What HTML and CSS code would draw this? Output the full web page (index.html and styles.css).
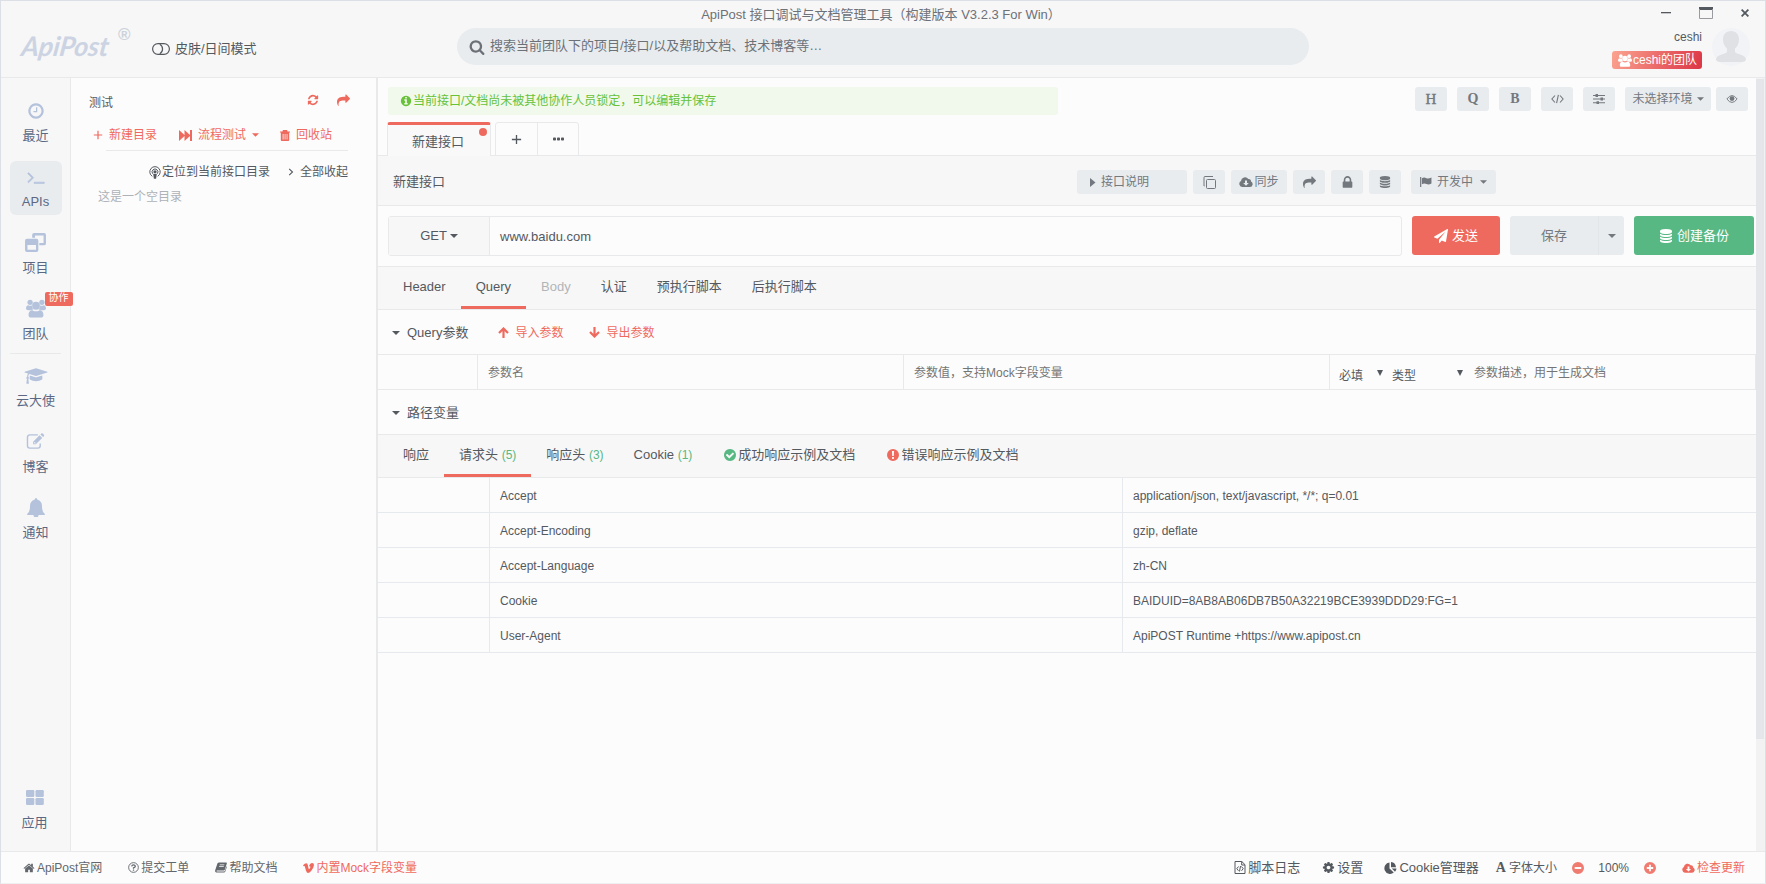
FILE: index.html
```html
<!DOCTYPE html>
<html lang="zh-CN">
<head>
  <meta charset="UTF-8" />
  <title>ApiPost</title>
  <link rel="stylesheet" href="styles.css">
</head>
<body>
  <svg class="sprite">
    <symbol id="i-clock" viewBox="0 0 1792 1792"><path d="M1024 544v448q0 14-9 23t-23 9h-320q-14 0-23-9t-9-23v-64q0-14 9-23t23-9h224v-352q0-14 9-23t23-9h64q14 0 23 9t9 23zm416 352q0-148-73-273t-198-198-273-73-273 73-198 198-73 273 73 273 198 198 273 73 273-73 198-198 73-273zm224 0q0 209-103 385.5t-279.5 279.5-385.5 103-385.5-103-279.5-279.5-103-385.5 103-385.5 279.5-279.5 385.5-103 385.5 103 279.5 279.5 103 385.5z"/></symbol>
    <symbol id="i-terminal" viewBox="0 0 1792 1792"><path d="M649 983l-466 466q-10 10-23 10t-23-10l-50-50q-10-10-10-23t10-23l393-393-393-393q-10-10-10-23t10-23l50-50q10-10 23-10t23 10l466 466q10 10 10 23t-10 23zm1079 457v64q0 14-9 23t-23 9h-960q-14 0-23-9t-9-23v-64q0-14 9-23t23-9h960q14 0 23 9t9 23z" stroke="currentColor" stroke-width="60"/></symbol>
    <symbol id="i-cap" viewBox="0 0 2304 1792"><path d="M1774 836l18 316q4 69-82 128t-235 93.500-323 34.500-323-34.500-235-93.500-82-128l18-316 574 181q22 7 48 7t48-7zm530-324q0 23-22 31l-1120 352q-4 1-10 1t-10-1l-652-206q-43 34-71 111.500t-34 178.500q63 36 63 109 0 69-58 107l58 433q2 14-8 25-9 11-24 11h-192q-15 0-24-11-10-11-8-25l58-433q-58-38-58-107 0-73 65-111 11-207 98-330l-333-104q-22-8-22-31t22-31l1120-352q4-1 10-1t10 1l1120 352q22 8 22 31z"/></symbol>
    <symbol id="i-refresh" viewBox="0 0 1792 1792"><path d="M1639 1056q0 5-1 7-64 268-268 434.5t-478 166.5q-146 0-282.500-55t-243.500-157l-129 129q-19 19-45 19t-45-19-19-45v-448q0-26 19-45t45-19h448q26 0 45 19t19 45-19 45l-137 137q71 66 161 102t187 36q134 0 250-65t186-179q11-17 53-117 8-23 30-23h192q13 0 22.500 9.500t9.500 22.500zm25-800v448q0 26-19 45t-45 19h-448q-26 0-45-19t-19-45 19-45l138-138q-148-137-349-137-134 0-250 65t-186 179q-11 17-53 117-8 23-30 23h-199q-13 0-22.500-9.500t-9.500-22.500v-7q65-268 270-434.500t480-166.500q146 0 284 55.500t245 156.500l130-129q19-19 45-19t45 19 19 45z"/></symbol>
    <symbol id="i-share" viewBox="0 0 1792 1792"><path d="M1792 640q0 26-19 45l-512 512q-19 19-45 19t-45-19-19-45v-256h-224q-98 0-175.500 6t-154 21.500-133 42.500-105.500 69.500-80 101-48.500 138.500-17.500 181q0 55 5 123 0 6 2.500 23.500t2.500 26.500q0 15-8.500 25t-23.500 10q-16 0-28-17-7-9-13-22t-13.500-30-10.500-24q-127-285-127-451 0-199 53-333 162-403 875-403h224v-256q0-26 19-45t45-19 45 19l512 512q19 19 19 45z"/></symbol>
    <symbol id="i-search" viewBox="0 0 1792 1792"><path d="M1216 832q0-185-131.500-316.500t-316.500-131.500-316.500 131.500-131.500 316.500 131.500 316.500 316.500 131.500 316.500-131.500 131.500-316.500zm512 832q0 52-38 90t-90 38q-54 0-90-38l-343-342q-179 124-399 124-143 0-273.500-55.500t-225-150-150-225-55.500-273.500 55.500-273.500 150-225 225-150 273.500-55.500 273.500 55.500 225 150 150 225 55.500 273.500q0 220-124 399l343 343q37 37 37 90z"/></symbol>
    <symbol id="i-info" viewBox="0 0 1792 1792"><path d="M1152 1376v-160q0-14-9-23t-23-9h-96v-512q0-14-9-23t-23-9h-320q-14 0-23 9t-9 23v160q0 14 9 23t23 9h96v320h-96q-14 0-23 9t-9 23v160q0 14 9 23t23 9h448q14 0 23-9t9-23zm-128-896v-160q0-14-9-23t-23-9h-192q-14 0-23 9t-9 23v160q0 14 9 23t23 9h192q14 0 23-9t9-23zm640 416q0 209-103 385.500t-279.500 279.500-385.500 103-385.500-103-279.500-279.500-103-385.500 103-385.500 279.500-279.500 385.500-103 385.500 103 279.500 279.500 103 385.500z"/></symbol>
    <symbol id="i-check" viewBox="0 0 1792 1792"><path d="M1412 734q0-28-18-46l-91-90q-19-19-45-19t-45 19l-408 407-226-226q-19-19-45-19t-45 19l-91 90q-18 18-18 46 0 27 18 45l362 362q19 19 45 19 27 0 46-19l543-543q18-18 18-45zm252 162q0 209-103 385.500t-279.500 279.500-385.500 103-385.500-103-279.500-279.500-103-385.500 103-385.500 279.500-279.500 385.500-103 385.500 103 279.500 279.500 103 385.500z"/></symbol>
    <symbol id="i-lock" viewBox="0 0 1792 1792"><path d="M640 768h512v-192q0-106-75-181t-181-75-181 75-75 181v192zm832 96v576q0 40-28 68t-68 28h-960q-40 0-68-28t-28-68v-576q0-40 28-68t68-28h32v-192q0-184 132-316t316-132 316 132 132 316v192h32q40 0 68 28t28 68z"/></symbol>
    <symbol id="i-db" viewBox="0 0 1792 1792"><path d="M896 768q237 0 443-43t325-127v170q0 69-103 128t-280 93.500-385 34.500-385-34.500-280-93.500-103-128v-170q119 84 325 127t443 43zm0 768q237 0 443-43t325-127v170q0 69-103 128t-280 93.500-385 34.500-385-34.500-280-93.500-103-128v-170q119 84 325 127t443 43zm0-384q237 0 443-43t325-127v170q0 69-103 128t-280 93.500-385 34.500-385-34.500-280-93.500-103-128v-170q119 84 325 127t443 43zm0-1152q208 0 385 34.500t280 93.500 103 128v128q0 69-103 128t-280 93.500-385 34.500-385-34.500-280-93.500-103-128v-128q0-69 103-128t280-93.500 385-34.500z"/></symbol>
    <symbol id="i-plane" viewBox="0 0 1792 1792"><path d="M1764 11q33 24 27 64l-256 1536q-5 29-32 45-14 8-31 8-11 0-24-5l-453-185-242 295q-18 23-49 23-13 0-22-4-19-7-30.500-23.500t-11.500-36.500v-349l864-1059-1069 925-395-162q-37-14-40-55-2-40 32-59l1664-960q15-9 32-9 20 0 36 11z"/></symbol>
    <symbol id="i-home" viewBox="0 0 1792 1792"><path d="M1472 992v480q0 26-19 45t-45 19h-384v-384h-256v384h-384q-26 0-45-19t-19-45v-480q0-1 .5-3t.5-3l575-474 575 474q1 2 1 6zm223-69l-62 74q-8 9-21 11h-3q-13 0-21-7l-692-577-692 577q-12 8-24 7-13-2-21-11l-62-74q-8-10-7-23.500t11-21.500l719-599q32-26 76-26t76 26l244 204v-195q0-14 9-23t23-9h192q14 0 23 9t9 23v408l219 182q10 8 11 21.500t-7 23.500z"/></symbol>
    <symbol id="i-cog" viewBox="0 0 1792 1792"><path d="M1152 896q0-106-75-181t-181-75-181 75-75 181 75 181 181 75 181-75 75-181zm512-109v222q0 12-8 23t-20 13l-185 28q-19 54-39 91 35 50 107 138 10 12 10 25t-9 23q-27 37-99 108t-94 71q-12 0-26-9l-138-108q-44 23-91 38-16 136-29 186-7 28-36 28h-222q-14 0-24.500-8.500t-11.500-21.500l-28-184q-49-16-90-37l-141 107q-10 9-25 9-14 0-25-11-126-114-165-168-7-10-7-23 0-12 8-23 15-21 51-66.500t54-70.500q-27-50-41-99l-183-27q-13-2-21-12.500t-8-23.500v-222q0-12 8-23t19-13l186-28q14-46 39-92-40-57-107-138-10-12-10-24 0-10 9-23 26-36 98.500-107.500t94.500-71.500q13 0 26 10l138 107q44-23 91-38 16-136 29-186 7-28 36-28h222q14 0 24.500 8.500t11.500 21.500l28 184q49 16 90 37l142-107q9-9 24-9 13 0 25 10 129 119 165 170 7 8 7 22 0 12-8 23-15 21-51 66.500t-54 70.500q26 50 41 98l183 28q13 2 21 12.500t8 23.500z"/></symbol>
    <symbol id="i-windows" viewBox="0 0 22 20"><path fill-rule="evenodd" d="M9.500 0h10.500a2 2 0 0 1 2 2v9a2 2 0 0 1-2 2h-5v-2.500h4.500v-8h-9V5H7.500V2a2 2 0 0 1 2-2zM2 6h10a2 2 0 0 1 2 2v10a2 2 0 0 1-2 2H2a2 2 0 0 1-2-2V8a2 2 0 0 1 2-2zm.5 6.500v5h9v-5z"/></symbol>
    <symbol id="i-users" viewBox="0 0 22 20"><circle cx="4.500" cy="3.200" r="2.900"/><circle cx="17.500" cy="3.200" r="2.900"/><path d="M0 10c0-2 1-3.600 2.500-3.600q2.500 1.200 4 0 0 3 1.800 4.600Q6.500 11 5.300 12H2.500Q0 12 0 10zM22 10c0-2-1-3.600-2.500-3.600q-2.500 1.200-4 0 0 3-1.800 4.600 1.800 0 3 1h2.800Q22 12 22 10z"/><circle cx="11" cy="7" r="4.300"/><path d="M7 11.800q4 2.600 8 0c3 0 4.200 2.600 4.200 5.500 0 1.800-1.200 2.700-2.700 2.700h-11c-1.500 0-2.700-.9-2.700-2.700 0-2.900 1.200-5.500 4.200-5.500z"/></symbol>
    <symbol id="i-edit" viewBox="0 0 20 18"><path fill="none" stroke="currentColor" stroke-width="1.500" d="M12.500 2H4a2.500 2.500 0 0 0-2.500 2.500v9A2.500 2.500 0 0 0 4 16h8.500a2.500 2.500 0 0 0 2.500-2.500V11"/><path fill-rule="evenodd" d="M7.500 9.200l6.800-6.800 2.800 2.800-6.800 6.800H7.500zM15.200 1.500l.9-.9q.8-.6 1.600 0l1.200 1.200q.6.800 0 1.600l-.9.900zM8.700 9.800v1.200h1.200l.4-.4-1.200-1.200z"/></symbol>
    <symbol id="i-bell" viewBox="0 0 18 19"><path d="M9 0q1.200 0 1.200 1.500C13.500 2.200 15 5 15 8c0 4.500 1 6.500 3 8 0 .6-.5 1-1 1h-5.500a2.500 2.500 0 0 1-5 0H1c-.5 0-1-.4-1-1 2-1.500 3-3.500 3-8 0-3 1.500-5.800 4.800-6.500Q7.800 0 9 0z"/></symbol>
    <symbol id="i-grid" viewBox="0 0 18 15"><rect width="8.300" height="7" rx="1.200"/><rect x="9.500" width="8.300" height="7" rx="1.200"/><rect y="8" width="8.300" height="7" rx="1.200"/><rect x="9.500" y="8" width="8.300" height="7" rx="1.200"/></symbol>
    <symbol id="i-toggle" viewBox="0 0 18 12"><g fill="none" stroke="currentColor" stroke-width="1.200"><rect x=".6" y=".6" width="16.800" height="10.800" rx="5.400"/><path d="M7.800 1.300a5.400 5.400 0 0 1 0 9.400"/></g></symbol>
    <symbol id="i-plus" viewBox="0 0 10 10"><path d="M4.400.8h1.200v3.600h3.600v1.200H5.600v3.600H4.400V5.600H.8V4.400h3.600z"/></symbol>
    <symbol id="i-ff" viewBox="0 0 13 11"><path d="M0 0l5.500 5V0L11 5V0h2v11h-2V6l-5.500 5V6L0 11z"/></symbol>
    <symbol id="i-trash" viewBox="0 0 10 11"><path fill-rule="evenodd" d="M3 0h4l.6 1.400H10v1.200h-.8V10q0 1-1 1H1.800q-1 0-1-1V2.600H0V1.400h2.400zM2.700 4v5.500h.8V4zm2 0v5.500h.7V4zm2 0v5.500h.7V4z"/></symbol>
    <symbol id="i-podcast" viewBox="0 0 12 13"><g fill="none" stroke="currentColor"><path d="M3.300 10.300a5.200 5.200 0 1 1 5.400 0"/><path d="M3.800 7.800a2.900 2.900 0 1 1 4.400 0"/></g><circle cx="6" cy="5.800" r="1.600"/><path d="M4.200 8h3.600l-.7 4.800H4.900z"/></symbol>
    <symbol id="i-right" viewBox="0 0 6 8"><path fill="none" stroke="currentColor" stroke-width="1.100" d="M1.200.8L4.500 4 1.200 7.200"/></symbol>
    <symbol id="i-caret" viewBox="0 0 8 4"><path d="M0 0h8L4 4z"/></symbol>
    <symbol id="i-play" viewBox="0 0 6 9"><path d="M0 0l5.500 4.500L0 9z"/></symbol>
    <symbol id="i-down" viewBox="0 0 6 6"><path d="M0 0h6L3 6z"/></symbol>
    <symbol id="i-dots" viewBox="0 0 11 4"><rect y=".5" width="3" height="3" rx=".8"/><rect x="4" y=".5" width="3" height="3" rx=".8"/><rect x="8" y=".5" width="3" height="3" rx=".8"/></symbol>
    <symbol id="i-copy" viewBox="0 0 13 13"><g fill="none" stroke="currentColor"><rect x="3.500" y="3.500" width="9" height="9" rx="1"/><path d="M1.500 10h-.5V1.500q0-1 1-1h8"/></g></symbol>
    <symbol id="i-cloud" viewBox="0 0 14 10"><path fill-rule="evenodd" d="M3.200 10A3.200 3.200 0 0 1 2 4 4 4 0 0 1 9.300 2.100 2.200 2.200 0 0 1 12 4.500 2.900 2.900 0 0 1 11 10zM6 3.500V6H4.200L7 8.800 9.800 6H8V3.500z"/></symbol>
    <symbol id="i-code" viewBox="0 0 13 10"><path fill="none" stroke="currentColor" stroke-width="1.100" d="M4 1.500L.9 5 4 8.500M9 1.500L12.100 5 9 8.500M7.400.8L5.600 9.200"/></symbol>
    <symbol id="i-sliders" viewBox="0 0 12 10"><path d="M0 1h12v1H0zM0 4.600h12v1H0zM0 8.200h12v1H0z"/><path d="M2.500 0H5v3H2.500zM7.500 3.600H10v3H7.500zM3.500 7.200H6v3H3.500z"/></symbol>
    <symbol id="i-eye" viewBox="0 0 14 10"><path fill="none" stroke="currentColor" stroke-width="1.100" d="M1 5q6-8 12 0-6 8-12 0z"/><circle cx="7" cy="4.500" r="2.800"/></symbol>
    <symbol id="i-flag" viewBox="0 0 13 11"><path d="M0 0h1.300v11H0zM2 1.300q2.500-1.500 5 0 2 .9 5.500-.8v6.700q-3 1.800-5.500.6-2.500-1.300-5 .3z"/></symbol>
    <symbol id="i-up-arrow" viewBox="0 0 11 11"><path fill="none" stroke="currentColor" stroke-width="2.200" d="M1 6l4.500-4.500L10 6M5.500 2v9"/></symbol>
    <symbol id="i-excl" viewBox="0 0 12 12"><path fill-rule="evenodd" d="M6 0a6 6 0 1 1 0 12A6 6 0 0 1 6 0zM4.900 2l.3 5h1.600l.3-5zm.2 6v1.900h1.800V8z"/></symbol>
    <symbol id="i-ask" viewBox="0 0 12 12"><g fill="none" stroke="currentColor"><circle cx="6" cy="6" r="5.300"/><path stroke-width="1.400" d="M4 4.700q.3-1.500 2-1.500t2 1.400Q8 5.600 6 6.400v.9"/></g><path d="M5.300 8.200h1.400v1.300H5.300z"/></symbol>
    <symbol id="i-book" viewBox="0 0 13 11"><path fill-rule="evenodd" d="M4.500 0h7.700q.9.200.6 1.100L10.600 8q-.3.800-1.200.8H2q-.8.500 0 1h7.900q.7 0 .9-.7l1.600-5 .5.500-1.700 5.300q-.4 1.100-1.500 1.100H1.500Q-.3 10.600.2 8.500L2.600 1.200Q3 0 4.500 0zm.7 2.300l-.2.700h5l.2-.7zM4.600 4.200l-.2.700h5l.2-.7z"/></symbol>
    <symbol id="i-v" viewBox="0 0 12 11"><path d="M0 2.600Q2 .2 3.500.2 5 .2 5.400 2.800q.5 3.800 1.100 4 .7-.2 1.500-2.200.3-1.300-1.500-.8Q7.500.1 10 0q2.200.1 2 2.500-.3 3-3.300 6.500Q6.900 11 5.500 11T3.200 8.200L2 4q-.3-1.200-1.400-.3z"/></symbol>
    <symbol id="i-file" viewBox="0 0 11 13"><path fill="none" stroke="currentColor" d="M.5.500h6.800l3.200 3.200v8.800H.5zM7.200.5V4h3.300M4 5.500L2.300 7.700 4 9.800M7 5.500l1.700 2.200L7 9.800M6 5l-1 5.500"/></symbol>
    <symbol id="i-pie" viewBox="0 0 13 12"><path d="M5.500 0.500V6.500l4.300 4A5.700 5.700 0 1 1 5.500.5zM7 0a5.700 5.700 0 0 1 5 5.200H7zM7.800 6.500H12.500q-.2 2-1.500 3.200z"/></symbol>
    <symbol id="i-zoomout" viewBox="0 0 12 12"><path fill-rule="evenodd" d="M6 0a6 6 0 1 1 0 12A6 6 0 0 1 6 0zM2.700 5v2h6.600V5z"/></symbol>
    <symbol id="i-zoomin" viewBox="0 0 12 12"><path fill-rule="evenodd" d="M6 0a6 6 0 1 1 0 12A6 6 0 0 1 6 0zM5.100 2.800v2.300H2.800v1.800h2.300v2.300h1.800V6.900h2.300V5.100H6.900V2.800z"/></symbol>
  </svg>

  <div class="app">
    <header class="header">
      <div class="brand">
        <span class="logo">ApiPost</span><span class="reg">®</span>
        <span class="skin"><svg width="18" height="12"><use href="#i-toggle"/></svg>皮肤/日间模式</span>
      </div>
      <div class="header-mid">
        <div class="title">ApiPost 接口调试与文档管理工具（构建版本 V3.2.3 For Win）</div>
        <div class="search"><svg width="16" height="16"><use href="#i-search"/></svg>搜索当前团队下的项目/接口/以及帮助文档、技术博客等…</div>
      </div>
      <div class="header-right">
        <div class="win">
          <svg width="10" height="10" viewBox="0 0 10 10"><path d="M0 4h10v1.300H0z"/></svg>
          <svg width="14" height="12" viewBox="0 0 14 12"><path d="M0 0h14v3H0z"/><path fill="none" stroke="#999b9f" d="M.5 2v9.500h13V2"/></svg>
          <svg width="8" height="8" viewBox="0 0 8 8"><path fill="none" stroke="currentColor" stroke-width="1.800" d="M.6.6l6.800 6.800M7.400.6L.6 7.400"/></svg>
        </div>
        <div class="user">
          <div class="user-info">
            <span class="user-name">ceshi</span>
            <span class="team"><svg width="14" height="13"><use href="#i-users"/></svg>ceshi的团队</span>
          </div>
          <svg class="avatar" width="38" height="38" viewBox="0 0 38 38"><circle cx="19" cy="19" r="19" fill="#f2f3f6"/><path fill="#dfe1e5" d="M19 3c5 0 8 3.500 8 8.500 0 4-2 7.500-4 9v3.500c1 2.500 11 2 11 8q-1 2-4 2H8q-3 0-4-2c0-6 10-5.500 11-8v-3.500c-2-1.500-4-5-4-9C11 6.500 14 3 19 3z"/></svg>
        </div>
      </div>
    </header>

    <div class="body">
      <nav class="nav">
        <a class="nav-item"><svg width="18" height="18"><use href="#i-clock"/></svg>最近</a>
        <a class="nav-item active"><svg width="20" height="18"><use href="#i-terminal"/></svg>APIs</a>
        <a class="nav-item"><svg width="21" height="19"><use href="#i-windows"/></svg>项目</a>
        <a class="nav-item"><svg width="20" height="19"><use href="#i-users"/></svg>团队<span class="nav-badge">协作</span></a>
        <hr class="nav-line">
        <a class="nav-item"><svg width="24" height="18"><use href="#i-cap"/></svg>云大使</a>
        <a class="nav-item"><svg width="19" height="17"><use href="#i-edit"/></svg>博客</a>
        <a class="nav-item"><svg width="18" height="19"><use href="#i-bell"/></svg>通知</a>
        <a class="nav-item nav-apps"><svg width="18" height="15"><use href="#i-grid"/></svg>应用</a>
      </nav>

      <aside class="tree">
        <div class="tree-head">
          <span>测试</span>
          <span class="tree-acts"><svg width="12" height="12"><use href="#i-refresh"/></svg><svg width="13" height="13"><use href="#i-share"/></svg></span>
        </div>
        <div class="tree-tools">
          <span class="tool"><svg width="10" height="10"><use href="#i-plus"/></svg>新建目录</span>
          <span class="tool flow"><svg width="13" height="11"><use href="#i-ff"/></svg>流程测试<svg width="7" height="4"><use href="#i-caret"/></svg></span>
          <span class="tool"><svg width="10" height="11"><use href="#i-trash"/></svg>回收站</span>
        </div>
        <div class="tree-sub">
          <span class="locate"><svg width="12" height="13"><use href="#i-podcast"/></svg>定位到当前接口目录</span>
          <span class="fold"><svg width="6" height="8"><use href="#i-right"/></svg>全部收起</span>
        </div>
        <div class="tree-empty">这是一个空目录</div>
      </aside>

      <main class="main">
        <div class="top-row">
          <div class="alert"><svg width="12" height="12"><use href="#i-info"/></svg>当前接口/文档尚未被其他协作人员锁定，可以编辑并保存</div>
          <div class="quick">
            <button class="btn serif thin">H</button>
            <button class="btn serif">Q</button>
            <button class="btn serif">B</button>
            <button class="btn"><svg width="13" height="10"><use href="#i-code"/></svg></button>
            <button class="btn"><svg width="12" height="10"><use href="#i-sliders"/></svg></button>
            <button class="btn env">未选择环境<svg width="7" height="4"><use href="#i-caret"/></svg></button>
            <button class="btn eye"><svg width="12" height="10"><use href="#i-eye"/></svg></button>
          </div>
        </div>

        <div class="tabs">
          <div class="tab">新建接口<i class="dot"></i></div>
          <div class="tab-extra">
            <span><svg width="11" height="11"><use href="#i-plus"/></svg></span>
            <span><svg width="11" height="4"><use href="#i-dots"/></svg></span>
          </div>
        </div>

        <div class="name-row">
          <span>新建接口</span>
          <div class="name-acts">
            <button class="btn desc"><svg width="6" height="9"><use href="#i-play"/></svg>接口说明</button>
            <button class="btn"><svg width="13" height="13"><use href="#i-copy"/></svg></button>
            <button class="btn sync"><svg width="14" height="10"><use href="#i-cloud"/></svg>同步</button>
            <button class="btn"><svg width="13" height="13"><use href="#i-share"/></svg></button>
            <button class="btn"><svg width="15" height="15"><use href="#i-lock"/></svg></button>
            <button class="btn"><svg width="12" height="12"><use href="#i-db"/></svg></button>
            <button class="btn state"><svg width="12" height="10"><use href="#i-flag"/></svg>开发中<svg width="7" height="4"><use href="#i-caret"/></svg></button>
          </div>
        </div>

        <div class="url-row">
          <div class="url-box">
            <div class="method">GET<svg width="8" height="4"><use href="#i-caret"/></svg></div>
            <div class="url">www.baidu.com</div>
          </div>
          <button class="big send"><svg width="14" height="14"><use href="#i-plane"/></svg>发送</button>
          <div class="big save"><span>保存</span><i><svg width="8" height="4"><use href="#i-caret"/></svg></i></div>
          <button class="big backup"><svg width="14" height="14"><use href="#i-db"/></svg>创建备份</button>
        </div>

        <div class="menu">
          <a>Header</a><a class="on">Query</a><a class="off">Body</a><a>认证</a><a>预执行脚本</a><a>后执行脚本</a>
        </div>

        <div class="section">
          <svg width="8" height="4"><use href="#i-caret"/></svg><span>Query参数</span>
          <a class="io"><svg width="11" height="11"><use href="#i-up-arrow"/></svg>导入参数</a>
          <a class="io"><svg class="flip" width="11" height="11"><use href="#i-up-arrow"/></svg>导出参数</a>
        </div>
        <div class="params">
          <div></div>
          <div>参数名</div>
          <div>参数值，支持Mock字段变量</div>
          <div class="param-last">
            <span class="sel must">必填<svg width="6" height="6"><use href="#i-down"/></svg></span>
            <span class="sel type">类型<svg width="6" height="6"><use href="#i-down"/></svg></span>
            <span>参数描述，用于生成文档</span>
          </div>
        </div>
        <div class="section">
          <svg width="8" height="4"><use href="#i-caret"/></svg><span>路径变量</span>
        </div>

        <div class="menu resp">
          <a>响应</a>
          <a class="on">请求头 <em>(5)</em></a>
          <a>响应头 <em>(3)</em></a>
          <a>Cookie <em>(1)</em></a>
          <a><svg class="ok" width="14" height="14"><use href="#i-check"/></svg>成功响应示例及文档</a>
          <a><svg class="err" width="12" height="12"><use href="#i-excl"/></svg>错误响应示例及文档</a>
        </div>
        <div class="rows">
          <div class="row"><i></i><span>Accept</span><span>application/json, text/javascript, */*; q=0.01</span></div>
          <div class="row"><i></i><span>Accept-Encoding</span><span>gzip, deflate</span></div>
          <div class="row"><i></i><span>Accept-Language</span><span>zh-CN</span></div>
          <div class="row"><i></i><span>Cookie</span><span>BAIDUID=8AB8AB06DB7B50A32219BCE3939DDD29:FG=1</span></div>
          <div class="row"><i></i><span>User-Agent</span><span>ApiPOST Runtime +https://www.apipost.cn</span></div>
        </div>
      </main>
      <div class="scroll"><div class="thumb"></div></div>
    </div>

    <footer class="footer">
      <div class="foot-left">
        <a><svg width="12" height="12"><use href="#i-home"/></svg>ApiPost官网</a>
        <a><svg width="11" height="11"><use href="#i-ask"/></svg>提交工单</a>
        <a><svg width="12" height="11"><use href="#i-book"/></svg>帮助文档</a>
        <a class="red"><svg width="11" height="10"><use href="#i-v"/></svg>内置Mock字段变量</a>
      </div>
      <div class="foot-right">
        <a class="f-log"><svg width="12" height="13"><use href="#i-file"/></svg>脚本日志</a>
        <a class="f-set"><svg width="13" height="13"><use href="#i-cog"/></svg>设置</a>
        <a class="f-cookie"><svg width="13" height="12"><use href="#i-pie"/></svg>Cookie管理器</a>
        <a class="f-font"><b>A</b>字体大小</a>
        <svg class="zoom" width="12" height="12"><use href="#i-zoomout"/></svg>
        <span class="pct">100%</span>
        <svg class="zoom" width="12" height="12"><use href="#i-zoomin"/></svg>
        <a class="f-update"><svg width="13" height="10"><use href="#i-cloud"/></svg>检查更新</a>
      </div>
    </footer>
  </div>
</body>
</html>
```
FILE: styles.css
```css
* {
  box-sizing: border-box;
  margin: 0;
  padding: 0;
}

body {
  width: 1766px;
  height: 884px;
  overflow: hidden;
  font: 13px/18px "Liberation Sans", "Noto Sans CJK SC", sans-serif;
  color: #54595f;
  background: #fcfcfc;
}

svg {
  display: block;
  flex: none;
  fill: currentColor;
}

.sprite {
  position: absolute;
  width: 0;
  height: 0;
}

.app {
  display: flex;
  flex-direction: column;
  height: 884px;
  border: 1px solid #dcdfe6;
  border-bottom-color: #eeeff1;
}

/* header */
.header {
  display: flex;
  justify-content: space-between;
  height: 77px;
  background: #f7f7f7;
  border-bottom: 1px solid #e8e9eb;
}

.brand {
  display: flex;
  width: 456px;
  padding: 27px 0 0 20px;
}

.logo {
  width: 97px;
  font: italic 700 27px/36px Lato, sans-serif;
  letter-spacing: -0.2px;
  color: #ccd4e3;
  white-space: nowrap;
  transform: skewX(-8deg);
}

.reg {
  width: 34px;
  margin-top: -2px;
  font-size: 17px;
  font-weight: bold;
  color: #ccd2da;
}

.skin {
  display: flex;
  align-items: center;
  gap: 5px;
  height: 18px;
  margin-top: 12px;
  white-space: nowrap;
}

.header-mid {
  width: 852px;
  text-align: center;
  color: #6c7178;
}

.title {
  height: 27px;
  padding: 5px 4px 0 0;
}

.search {
  display: flex;
  align-items: center;
  gap: 5px;
  height: 37px;
  padding: 0 12px 2px;
  border-radius: 19px;
  background: #e8ecef;
}

.search svg {
  margin-top: 2px;
}

.header-right {
  width: 456px;
}

.win {
  display: flex;
  justify-content: flex-end;
  align-items: center;
  gap: 28px;
  height: 27px;
  padding: 0 16px 3px 0;
}

.user {
  display: flex;
  justify-content: flex-end;
  gap: 10px;
  padding-right: 15px;
}

.user-info {
  display: flex;
  flex-direction: column;
  align-items: flex-end;
  gap: 5px;
  font-size: 12px;
}

.team {
  display: flex;
  align-items: center;
  gap: 1px;
  width: 90px;
  height: 18px;
  padding-left: 6px;
  border-radius: 3px;
  color: #fff;
  white-space: nowrap;
  background: linear-gradient(110deg, #fba390, #dc3545);
}

/* body */
.body {
  display: flex;
  height: 773px;
}

.nav {
  display: flex;
  flex-direction: column;
  align-items: center;
  gap: 12px;
  width: 70px;
  padding-top: 17px;
  border-right: 1px solid #e8e9eb;
  background: #f7f7f7;
}

.nav-item {
  position: relative;
  display: grid;
  grid-template-rows: 31px 20px;
  place-items: center;
  width: 52px;
  height: 54px;
  border-radius: 6px;
  color: #5b6884;
}

.nav-item svg {
  color: #b4c2dc;
}

.nav-item.active {
  background: #e8ecef;
}

.nav-badge {
  position: absolute;
  top: -1px;
  left: 35px;
  width: 28px;
  height: 14px;
  border-radius: 2px;
  font-size: 10px;
  line-height: 12px;
  text-align: center;
  color: #fff;
  background: #ef6a5e;
}

.nav-line {
  width: 51px;
  height: 1px;
  margin: -6px 0;
  border: none;
  background: #e8e9eb;
}

.nav-apps {
  width: 56px;
  margin: auto 2px 15px 0;
}

.tree {
  width: 307px;
  padding: 14px 28px 0 18px;
  border-right: 2px solid #e8e9eb;
  font-size: 12px;
}

.tree-head {
  display: flex;
  justify-content: space-between;
  height: 34px;
  line-height: 22px;
}

.tree-acts {
  display: flex;
  gap: 18px;
  padding-top: 2px;
  margin-right: -2px;
  color: #ef6a5e;
}

.tree-tools {
  display: flex;
  gap: 20px;
  height: 24px;
  padding: 0 0 6px 4px;
  color: #ef6a5e;
}

.tool {
  display: flex;
  align-items: center;
  gap: 6px;
}

.tool:first-child {
  gap: 6px;
  width: 66px;
}

.flow {
  width: 81px;
}

.tree-sub {
  display: flex;
  justify-content: flex-end;
  gap: 18px;
  margin-left: 17px;
  padding: 12px 0 7px;
  border-top: 1px solid #e8e9eb;
}

.tree-sub span {
  display: flex;
  align-items: center;
}

.locate {
  gap: 1px;
}

.fold {
  gap: 6px;
}

.tree-empty {
  padding-left: 9px;
  color: #adb2b8;
}

/* main */
.main {
  width: 1378px;
}

.top-row {
  display: flex;
  justify-content: space-between;
  height: 44px;
  padding: 9px 8px 0 10px;
}

.alert {
  display: flex;
  align-items: center;
  gap: 1px;
  width: 670px;
  height: 28px;
  padding-left: 12px;
  border-radius: 3px;
  font-size: 12px;
  color: #67c23a;
  background: #f0f9eb;
}

.quick {
  display: flex;
  gap: 10px;
}

.btn {
  display: flex;
  align-items: center;
  justify-content: center;
  width: 32px;
  height: 24px;
  border: none;
  border-radius: 3px;
  font: 12px/18px "Liberation Sans", "Noto Sans CJK SC", sans-serif;
  color: #73787e;
  background: #e8ecef;
}

.serif {
  font: bold 14px/18px "Liberation Serif", serif;
}

.thin {
  font-size: 15px;
  font-weight: normal;
  -webkit-text-stroke: 0.4px;
}

.env {
  gap: 4px;
  width: 86px;
}

.eye {
  margin-left: -5px;
}

.tabs {
  display: flex;
  gap: 4px;
  height: 34px;
  padding-left: 9px;
  box-shadow: inset 0 -1px #e8e9eb;
}

.tab {
  position: relative;
  width: 104px;
  padding: 8px 0 0 24px;
  border: 1px solid #e8e9eb;
  border-top: 3px solid #ef6a5e;
  border-bottom: none;
  border-radius: 3px 3px 0 0;
  background: #f9f9f9;
}

.dot {
  position: absolute;
  top: 3px;
  right: 3px;
  width: 8px;
  height: 8px;
  border-radius: 50%;
  background: #ef6a5e;
}

.tab-extra {
  display: flex;
  border: 1px solid #e8e9eb;
  border-radius: 3px 3px 0 0;
}

.tab-extra span {
  display: grid;
  place-items: center;
  width: 41px;
}

.tab-extra span + span {
  border-left: 1px solid #e8e9eb;
}

.name-row {
  display: flex;
  justify-content: space-between;
  height: 50px;
  padding: 14px 260px 0 15px;
  border-bottom: 1px solid #e8e9eb;
  line-height: 23px;
  background: #f7f7f7;
}

.name-acts {
  display: flex;
  gap: 6px;
}

.name-acts .desc {
  justify-content: flex-start;
  gap: 5px;
  width: 110px;
  padding-left: 13px;
}

.name-acts .sync {
  gap: 1px;
  width: 56px;
}

.name-acts .state {
  gap: 5px;
  width: 85px;
  margin-left: 4px;
}

.state svg:last-child {
  margin-left: 2px;
}

.url-row {
  display: flex;
  gap: 10px;
  height: 61px;
  padding: 10px 0 0 10px;
  border-bottom: 1px solid #e8e9eb;
}

.url-box {
  display: flex;
  width: 1014px;
  height: 40px;
  border: 1px solid #e8e9eb;
  border-radius: 3px;
}

.method {
  display: flex;
  align-items: center;
  justify-content: center;
  gap: 3px;
  width: 101px;
  padding-bottom: 1px;
  border-right: 1px solid #e8e9eb;
  background: #f7f7f7;
}

.url {
  padding: 11px 10px;
}

.big {
  display: flex;
  align-items: center;
  justify-content: center;
  gap: 4px;
  height: 39px;
  border: none;
  border-radius: 3px;
  font: 13px/18px "Liberation Sans", "Noto Sans CJK SC", sans-serif;
  color: #fff;
}

.send {
  width: 88px;
  background: #ef6a5e;
}

.save {
  gap: 0;
  width: 114px;
  color: #73787e;
  background: #e8ecef;
}

.save span {
  width: 88px;
  text-align: center;
}

.save i {
  display: grid;
  place-items: center;
  width: 26px;
  height: 39px;
  border-left: 1px solid #e3e6e9;
}

.backup {
  width: 120px;
  background: #58b883;
}

.menu {
  display: flex;
  height: 43px;
  padding-left: 10px;
  border-bottom: 1px solid #e8e9eb;
  background: #f7f7f7;
}

.menu a {
  display: flex;
  height: 42px;
  padding: 11px 15px 0;
  white-space: pre;
}

.menu .on {
  border-bottom: 3px solid #ef6a5e;
}

.menu .off {
  color: #b2b5b8;
}

.menu em {
  font-size: 12px;
  font-style: normal;
  color: #58b883;
}

.menu svg {
  margin: 2px 1px 0;
}

.menu .err {
  margin: 3px 2px 0;
}

.ok {
  color: #58b883;
}

.err {
  color: #ef6a5e;
}

.section {
  display: flex;
  align-items: center;
  height: 45px;
  padding: 1px 0 0 14px;
  border-bottom: 1px solid #e8e9eb;
}

.section > span {
  margin-left: 7px;
}

.io {
  display: flex;
  align-items: center;
  gap: 6px;
  margin-left: 30px;
  font-size: 12px;
  color: #ef6a5e;
}

.io + .io {
  margin-left: 26px;
}

.flip {
  transform: rotate(180deg);
}

.params {
  display: grid;
  grid-template-columns: 100px 426px 426px 426px;
  height: 35px;
  border-bottom: 1px solid #e8e9eb;
  font-size: 12px;
  color: #757575;
}

.params > div {
  padding: 9px 0 0 10px;
  border-right: 1px solid #e8e9eb;
}

.params .param-last {
  display: flex;
  padding-left: 9px;
}

.sel {
  display: flex;
  justify-content: space-between;
  color: #54595f;
  padding-top: 3px;
}

.sel svg {
  margin-top: 3px;
}

.must {
  width: 44px;
  margin-right: 9px;
}

.type {
  width: 71px;
  margin-right: 11px;
}

.row {
  display: grid;
  grid-template-columns: 112px 633px 633px;
  height: 35px;
  border-bottom: 1px solid #e6eaee;
  font-size: 12px;
  line-height: 37px;
}

.row > * {
  height: 34px;
  border-right: 1px solid #e6eaee;
}

.row span {
  padding-left: 10px;
}

.row > :last-child {
  border-right: none;
}

.scroll {
  width: 9px;
  padding-top: 1px;
  background: #f2f2f3;
}

.thumb {
  width: 8px;
  height: 660px;
  background: #e5e6e9;
}

/* footer */
.footer {
  display: flex;
  justify-content: space-between;
  height: 32px;
  border-top: 1px solid #e8e9eb;
  font-size: 12px;
}

.footer a {
  display: flex;
  align-items: center;
  gap: 2px;
}

.foot-left {
  display: flex;
  align-items: center;
  gap: 26px;
  padding-left: 22px;
  color: #62676d;
}

.foot-left .red {
  color: #ef6a5e;
}

.foot-right {
  display: flex;
  align-items: center;
  padding-right: 20px;
}

.f-log, .f-set, .f-cookie {
  margin-right: 22px;
  font-size: 13px;
}

.footer .f-set {
  margin-right: 21px;
}

.footer .f-cookie {
  margin-right: 17px;
}

.f-font b {
  font: bold 14px/18px "Liberation Serif", serif;
}

.footer .f-font {
  gap: 3px;
}

.zoom {
  margin-left: 15px;
  color: #f07b70;
}

.pct {
  width: 45px;
  text-align: right;
}

.f-update {
  margin-left: 26px;
  color: #ef6a5e;
}
```
